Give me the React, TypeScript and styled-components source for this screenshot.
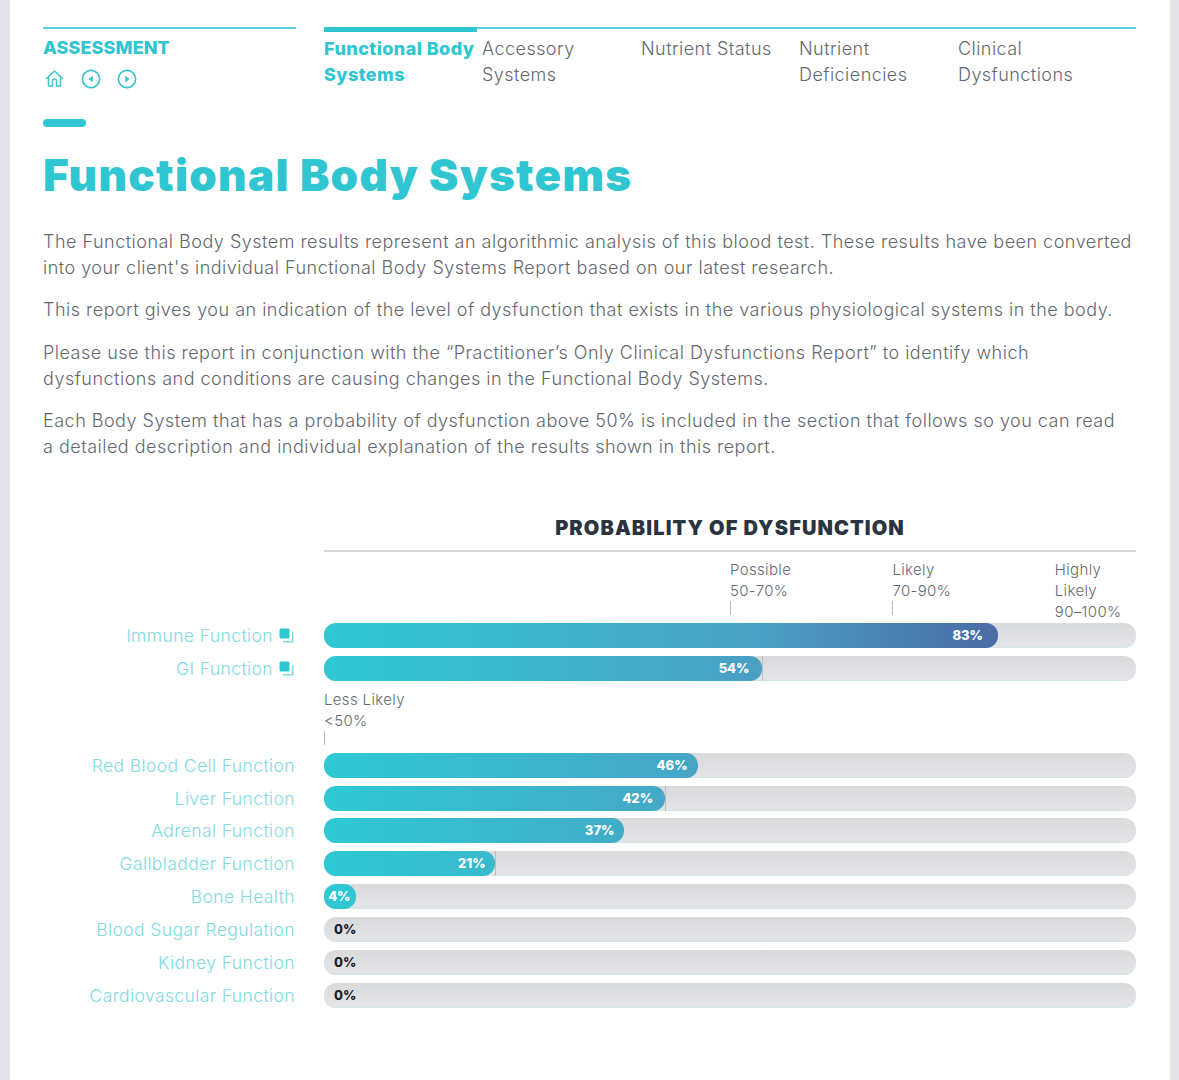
import React from 'react';
import styled, { createGlobalStyle } from 'styled-components';

const GlobalStyle = createGlobalStyle`
  html, body {
    margin: 0;
    padding: 0;
    background: #fff;
  }
  body {
    font-family: 'Inter', 'Liberation Sans', sans-serif;
    color: #64676e;
  }
`;

const Sheet = styled.div`
  box-sizing: border-box;
  width: 1179px;
  height: 1080px;
  overflow: hidden;
  padding: 27px 34px 0 33px;
  background: #fff;
  border-left: 10px solid #e2e2e8;
  border-right: 9px solid #e2e2e8;
`;

const TopNav = styled.nav`
  display: grid;
  grid-template-columns: 253px 812px;
  column-gap: 28px;
  height: 92px;
`;

const Section = styled.div`
  border-top: 2px solid #56cfd8;
`;

const SectionName = styled.div`
  margin-top: 8px;
  font-size: 18px;
  line-height: 22px;
  font-weight: 800;
  color: #2fc6d1;
  letter-spacing: 0.1px;
`;

const IconRow = styled.div`
  display: flex;
  gap: 16.5px;
  margin: 10px 0 0 2px;
  color: #39c6cf;
  svg {
    display: block;
  }
`;

const Tabs = styled.div`
  display: grid;
  grid-template-columns: 153px 159px 158px 159px 183px;
`;

const Tab = styled.div<{ $active?: boolean }>`
  box-sizing: border-box;
  border-top: ${(p) => (p.$active ? '5px solid #2fc6d1' : '2px solid #56cfd8')};
  padding: ${(p) => (p.$active ? '4px 0 0 0' : '7px 0 0 5px')};
  font-size: 18px;
  line-height: 26px;
  font-weight: ${(p) => (p.$active ? 800 : 300)};
  color: ${(p) => (p.$active ? '#2fc6d1' : '#64676e')};
  white-space: pre-line;
  letter-spacing: 0.45px;
`;

const Accent = styled.div`
  width: 43px;
  height: 8px;
  border-radius: 4px;
  background: #2fc6d1;
`;

const Title = styled.h1`
  margin: 20px 0 0;
  font-size: 44px;
  line-height: 56px;
  font-weight: 900;
  color: #2fc6d1;
  letter-spacing: 1.3px;
`;

const Copy = styled.div`
  margin-top: 26px;
  width: 1092px;
`;

const Paragraph = styled.p`
  margin: 0 0 16.3px;
  font-size: 18px;
  line-height: 26px;
  font-weight: 300;
  letter-spacing: 0.49px;
  color: #64676e;
`;

const Chart = styled.section`
  display: grid;
  grid-template-columns: 252px 812px;
  column-gap: 29px;
  margin-top: 55px;
`;

const ChartHead = styled.div`
  grid-column: 2;
  border-bottom: 2px solid #d6d8de;
  height: 35px;
  font-size: 20px;
  line-height: 26px;
  font-weight: 900;
  letter-spacing: 1.1px;
  color: #2a3340;
  text-align: center;
`;

const Scale = styled.div<{ $columns: string; $height: number }>`
  grid-column: 2;
  display: grid;
  grid-template-columns: ${(p) => p.$columns};
  height: ${(p) => p.$height}px;
`;

const ScaleItem = styled.div<{ $flush?: boolean }>`
  padding-top: ${(p) => (p.$flush ? 0 : 7)}px;
  font-size: 15px;
  line-height: 21px;
  font-weight: 300;
  letter-spacing: 0.35px;
  color: #66696f;
  white-space: pre-line;
`;

const ScaleTick = styled.div`
  width: 1px;
  height: 14px;
  background: #b9bcc2;
`;

const RowLabel = styled.div`
  grid-column: 1;
  display: flex;
  justify-content: flex-end;
  align-items: center;
  gap: 6px;
  height: 25px;
  font-size: 17.5px;
  font-weight: 300;
  letter-spacing: 0.4px;
  color: #7fdbe1;
  svg {
    display: block;
    margin-right: 1px;
  }
`;

const Track = styled.div`
  grid-column: 2;
  position: relative;
  height: 25px;
  margin-bottom: 7.9px;
  border-radius: 12px;
  background: linear-gradient(180deg, #d9dadc, #e5e5e7);
  box-shadow: inset 0 -1px 0 #d3e4e8;
`;

const Fill = styled.div<{ $tick?: boolean; $inset: number }>`
  position: relative;
  box-sizing: border-box;
  height: 25px;
  border-radius: 12px;
  text-align: right;
  padding-right: ${(p) => p.$inset}px;
  background-image: linear-gradient(90deg, #2dc9d3 0%, #4b9fc4 65%, #4a6ca6 100%);
  background-repeat: no-repeat;
  font-size: 13px;
  line-height: 25px;
  font-weight: 800;
  color: #fff;
  &::after {
    content: '';
    display: ${(p) => (p.$tick ? 'block' : 'none')};
    position: absolute;
    top: 0;
    right: -1px;
    width: 1px;
    height: 25px;
    background: #b4bcc4;
  }
`;

const ZeroValue = styled.div`
  padding-left: 10px;
  font-size: 13px;
  line-height: 25px;
  font-weight: 800;
  color: #1c2129;
`;

const HomeIcon = () => (
  <svg width="19" height="19" viewBox="0 0 19 19" fill="none" stroke="currentColor" strokeWidth="1.5" strokeLinejoin="round" strokeLinecap="round">
    <path d="M1.5 9.5 9.5 2l8 7.5" />
    <path d="M3.5 8.5V17h4v-5a2 2 0 0 1 4 0v5h4V8.5" />
  </svg>
);

const CircleArrow = ({ right }: { right?: boolean }) => (
  <svg width="20" height="20" viewBox="0 0 20 20" fill="none">
    <circle cx="10" cy="10" r="8.6" stroke="currentColor" strokeWidth="1.7" />
    <path d={right ? 'M8.2 6.4 12.6 10l-4.4 3.6z' : 'M11.8 6.4 7.4 10l4.4 3.6z'} fill="currentColor" />
  </svg>
);

const LinkIcon = () => (
  <svg width="15" height="15" viewBox="0 0 15 15" fill="none">
    <rect x="0.5" y="0.5" width="10" height="10" rx="1.5" fill="#2fc6d1" />
    <path d="M13.7 4v9.7H4" stroke="#7fdbe1" strokeWidth="1.6" />
  </svg>
);

const tabs = ['Accessory\nSystems', 'Nutrient Status', 'Nutrient\nDeficiencies', 'Clinical\nDysfunctions'];

type RowData = { name: string; value: number; inset?: number; tick?: boolean };

const topRows: RowData[] = [
  { name: 'Immune Function', value: 83, inset: 15 },
  { name: 'GI Function', value: 54, inset: 13, tick: true },
];

const lowerRows: RowData[] = [
  { name: 'Red Blood Cell Function', value: 46, inset: 10 },
  { name: 'Liver Function', value: 42, inset: 12, tick: true },
  { name: 'Adrenal Function', value: 37, inset: 10 },
  { name: 'Gallbladder Function', value: 21, inset: 9, tick: true },
  { name: 'Bone Health', value: 4, inset: 6 },
  { name: 'Blood Sugar Regulation', value: 0 },
  { name: 'Kidney Function', value: 0 },
  { name: 'Cardiovascular Function', value: 0 },
];

const Row = ({ row, linked }: { row: RowData; linked?: boolean }) => (
  <>
    <RowLabel>
      {row.name}
      {linked && <LinkIcon />}
    </RowLabel>
    <Track>
      {row.value > 0 ? (
        <Fill
          $tick={row.tick}
          $inset={row.inset ?? 10}
          style={{
            width: `${row.value}%`,
            // the gradient runs over the track up to 83%, not over each bar
            backgroundSize: `${(83 / row.value) * 100}% 100%`,
          }}
        >
          {row.value}%
        </Fill>
      ) : (
        <ZeroValue>0%</ZeroValue>
      )}
    </Track>
  </>
);

export default function App() {
  return (
    <>
      <GlobalStyle />
      <Sheet>
        <TopNav>
          <Section>
            <SectionName>ASSESSMENT</SectionName>
            <IconRow>
              <HomeIcon />
              <CircleArrow />
              <CircleArrow right />
            </IconRow>
          </Section>
          <Tabs>
            <Tab $active>{'Functional Body\nSystems'}</Tab>
            {tabs.map((t) => (
              <Tab key={t}>{t}</Tab>
            ))}
          </Tabs>
        </TopNav>
        <Accent />
        <Title>Functional Body Systems</Title>
        <Copy>
          <Paragraph>
            The Functional Body System results represent an algorithmic analysis of this blood test. These results have been converted into your client's individual Functional Body Systems Report based on our latest research.
          </Paragraph>
          <Paragraph>
            This report gives you an indication of the level of dysfunction that exists in the various physiological systems in the body.
          </Paragraph>
          <Paragraph>
            Please use this report in conjunction with the “Practitioner’s Only Clinical Dysfunctions Report” to identify which dysfunctions and conditions are causing changes in the Functional Body Systems.
          </Paragraph>
          <Paragraph>
            Each Body System that has a probability of dysfunction above 50% is included in the section that follows so you can read<br />
            a detailed description and individual explanation of the results shown in this report.
          </Paragraph>
        </Copy>
        <Chart>
          <ChartHead>PROBABILITY OF DYSFUNCTION</ChartHead>
          <Scale $columns="50% 20% 20% 10%" $height={71}>
            <div />
            <ScaleItem>
              {'Possible\n50-70%'}
              <ScaleTick />
            </ScaleItem>
            <ScaleItem>
              {'Likely\n70-90%'}
              <ScaleTick />
            </ScaleItem>
            <ScaleItem>{'Highly\nLikely\n90–100%'}</ScaleItem>
          </Scale>
          {topRows.map((r) => (
            <Row key={r.name} row={r} linked />
          ))}
          <Scale $columns="1fr" $height={64}>
            <ScaleItem $flush>
              {'Less Likely\n<50%'}
              <ScaleTick />
            </ScaleItem>
          </Scale>
          {lowerRows.map((r) => (
            <Row key={r.name} row={r} />
          ))}
        </Chart>
      </Sheet>
    </>
  );
}
